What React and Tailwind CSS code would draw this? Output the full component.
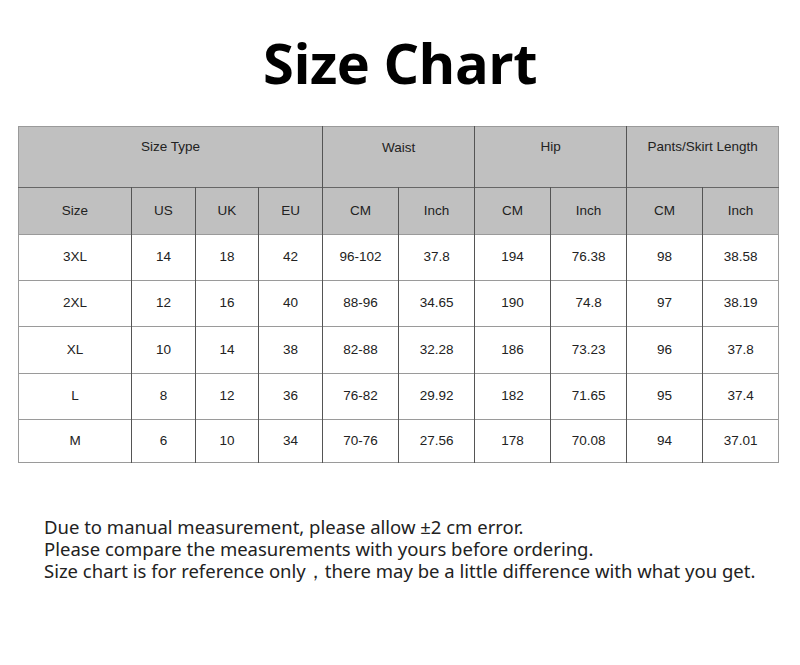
import React from "react";

const rows = [
  ["3XL", "14", "18", "42", "96-102", "37.8", "194", "76.38", "98", "38.58"],
  ["2XL", "12", "16", "40", "88-96", "34.65", "190", "74.8", "97", "38.19"],
  ["XL", "10", "14", "38", "82-88", "32.28", "186", "73.23", "96", "37.8"],
  ["L", "8", "12", "36", "76-82", "29.92", "182", "71.65", "95", "37.4"],
  ["M", "6", "10", "34", "70-76", "27.56", "178", "70.08", "94", "37.01"],
];

const colWidths = ["w-[113px]", "w-[64px]", "w-[63px]", "w-[64px]", "w-[76px]", "w-[76px]", "w-[76px]", "w-[76px]", "w-[76px]", "w-[76px]"];
const rowHeights = ["h-[46px]", "h-[46px]", "h-[47px]", "h-[46px]", "h-[43px]"];

export default function App() {
  return (
    <div className="w-[800px] h-[665px] bg-white overflow-hidden">
      <h1 className="pt-[24px] h-[126px] text-center text-[56px] leading-[76px] tracking-[-0.5px] font-bold text-black font-['Open_Sans',sans-serif]">
        Size Chart
      </h1>

      <div className="px-[18px]">
        <table className="w-[760px] table-fixed border-collapse border border-[#9a9a9a] font-['Liberation_Sans',Arial,sans-serif] text-[13.5px] text-[#222]">
          <colgroup>
            {colWidths.map((w, i) => (
              <col key={i} className={w} />
            ))}
          </colgroup>
          <thead className="bg-[#c0c0c0]">
            <tr className="h-[61px]">
              <th colSpan={4} className="align-top pt-[10px] font-normal border-r border-[#555]">Size Type</th>
              <th colSpan={2} className="align-top pt-[11px] font-normal border-r border-[#555]">Waist</th>
              <th colSpan={2} className="align-top pt-[10px] font-normal border-r border-[#555]">Hip</th>
              <th colSpan={2} className="align-top pt-[10px] font-normal">Pants/Skirt Length</th>
            </tr>
            <tr className="h-[47px] border-t border-[#666]">
              {["Size", "US", "UK", "EU", "CM", "Inch", "CM", "Inch", "CM", "Inch"].map((h, i) => (
                <th key={i} className={`font-normal ${i < 9 ? "border-r border-[#555]" : ""}`}>
                  {h}
                </th>
              ))}
            </tr>
          </thead>
          <tbody>
            {rows.map((r, ri) => (
              <tr key={ri} className={`${rowHeights[ri]} border-t border-[#9a9a9a]`}>
                {r.map((c, ci) => (
                  <td key={ci} className={`text-center ${ci < 9 ? "border-r border-[#555]" : ""}`}>
                    {c}
                  </td>
                ))}
              </tr>
            ))}
          </tbody>
        </table>
      </div>

      <div className="pl-[44px] pt-[53px] text-[18.5px] leading-[22px] text-[#222] font-['Noto_Sans',sans-serif]">
        <p>Due to manual measurement, please allow ±2 cm error.</p>
        <p>Please compare the measurements with yours before ordering.</p>
        <p>Size chart is for reference only，there may be a little difference with what you get.</p>
      </div>
    </div>
  );
}
